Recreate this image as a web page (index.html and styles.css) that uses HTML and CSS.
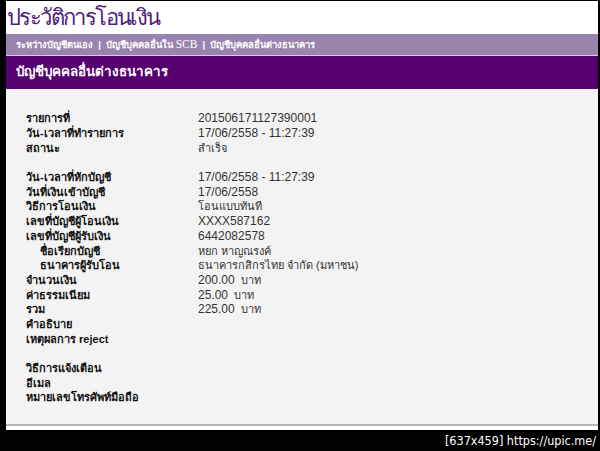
FILE: index.html
```html
<!DOCTYPE html>
<html lang="th">
<head>
<meta charset="utf-8">
<title>ประวัติการโอนเงิน</title>
<link rel="stylesheet" href="styles.css">
</head>
<body>
<div class="frame">
  <div class="page">
    <h1 class="title">ประวัติการโอนเงิน</h1>
    <div class="nav">ระหว่างบัญชีตนเอง&nbsp;&nbsp;|&nbsp;&nbsp;บัญชีบุคคลอื่นใน <span class="scb">SCB</span>&nbsp;&nbsp;|&nbsp;&nbsp;บัญชีบุคคลอื่นต่างธนาคาร</div>
    <div class="header">บัญชีบุคคลอื่นต่างธนาคาร</div>
    <div class="content">
      <div class="grid">
        <div class="lbl">รายการที่</div><div class="val num">201506171127390001</div>
        <div class="lbl">วัน-เวลาที่ทำรายการ</div><div class="val num">17/06/2558 - 11:27:39</div>
        <div class="lbl">สถานะ</div><div class="val">สำเร็จ</div>
        <div class="blank"></div>
        <div class="lbl">วัน-เวลาที่หักบัญชี</div><div class="val num">17/06/2558 - 11:27:39</div>
        <div class="lbl">วันที่เงินเข้าบัญชี</div><div class="val num">17/06/2558</div>
        <div class="lbl">วิธีการโอนเงิน</div><div class="val">โอนแบบทันที</div>
        <div class="lbl">เลขที่บัญชีผู้โอนเงิน</div><div class="val num">XXXX587162</div>
        <div class="lbl">เลขที่บัญชีผู้รับเงิน</div><div class="val num">6442082578</div>
        <div class="lbl sub">ชื่อเรียกบัญชี</div><div class="val">หยก หาญณรงค์</div>
        <div class="lbl sub">ธนาคารผู้รับโอน</div><div class="val">ธนาคารกสิกรไทย จำกัด (มหาชน)</div>
        <div class="lbl">จำนวนเงิน</div><div class="val"><span class="num">200.00</span>&nbsp; บาท</div>
        <div class="lbl">ค่าธรรมเนียม</div><div class="val"><span class="num">25.00</span>&nbsp; บาท</div>
        <div class="lbl">รวม</div><div class="val"><span class="num">225.00</span>&nbsp; บาท</div>
        <div class="lbl">คำอธิบาย</div><div class="val"></div>
        <div class="lbl">เหตุผลการ reject</div><div class="val"></div>
        <div class="blank"></div>
        <div class="lbl">วิธีการแจ้งเตือน</div><div class="val"></div>
        <div class="lbl">อีเมล</div><div class="val"></div>
        <div class="lbl">หมายเลขโทรศัพท์มือถือ</div><div class="val"></div>
      </div>
    </div>
  </div>
  <div class="stamp">[637x459] https://upic.me/</div>
</div>
</body>
</html>
```

FILE: styles.css
```css
* { box-sizing: border-box; }
html, body { margin: 0; padding: 0; background: #000; }
body { font-family: Tahoma, "Liberation Sans", sans-serif; }
.frame {
  width: 600px;
  height: 451px;
  background: #000;
  padding: 1px 2px 0 6px;
  display: flex;
  flex-direction: column;
}
.page {
  background: #fff;
  height: 429px;
  display: flex;
  flex-direction: column;
  padding-bottom: 4px;
}
.title {
  margin: 0;
  height: 33px;
  padding-left: 1px;
  font-size: 22px;
  line-height: 33px;
  font-weight: normal;
  color: #4e1c7c;
  letter-spacing: -1.6px;
}
.nav {
  height: 22px;
  background: #9884ad;
  border-bottom: 1px solid #dcc8ec;
  color: #fff;
  font-weight: bold;
  font-size: 9.4px;
  line-height: 21px;
  padding-left: 10px;
  white-space: nowrap;
}
.scb {
  font-family: "Liberation Serif", serif;
  font-weight: normal;
  font-size: 11.5px;
}
.header {
  height: 33px;
  background: #55006f;
  color: #fff;
  font-weight: bold;
  font-size: 13.4px;
  line-height: 32px;
  padding-left: 10px;
}
.content {
  flex: 1;
  background: #f3f3f3;
  border-bottom: 2px solid #b5b5b5;
  padding: 22px 0 0 20px;
}
.grid {
  display: grid;
  grid-template-columns: 172px 1fr;
  grid-auto-rows: 14.7px;
  align-items: center;
}
.blank { grid-column: 1 / 3; }
.lbl {
  font-weight: bold;
  font-size: 11px;
  color: #111;
  white-space: nowrap;
}
.lbl.sub { padding-left: 14px; }
.val {
  font-size: 11px;
  color: #333;
  white-space: nowrap;
}
.num {
  font-family: "Liberation Sans", Arial, sans-serif;
  font-size: 12px;
  color: #333;
}
.stamp {
  flex: 1;
  color: #fff;
  text-align: right;
  font-family: "DejaVu Sans Condensed", "DejaVu Sans", sans-serif;
  font-size: 12.5px;
  line-height: 21px;
  padding-right: 2px;
}
```
